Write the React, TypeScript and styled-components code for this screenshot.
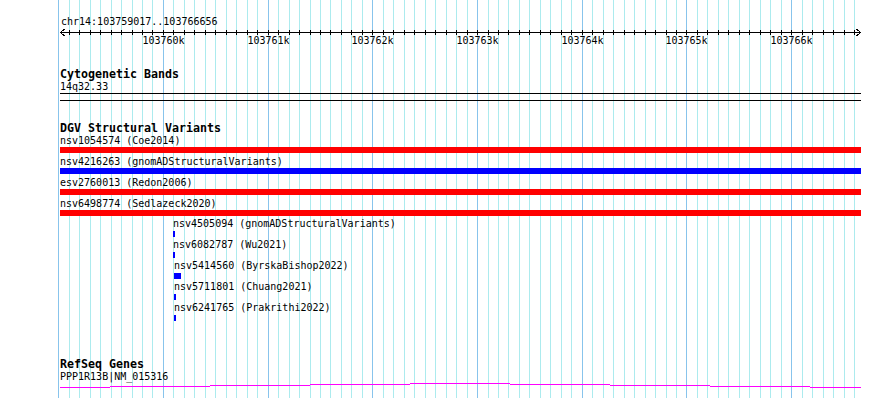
import React from "react";
import styled, { createGlobalStyle } from "styled-components";

const START = 103759017;
const END = 103766656;
const TRACK_LEFT = 60;
const TRACK_WIDTH = 800;
const PAGE_W = 890;
const PAGE_H = 398;

const toX = (bp: number) => ((bp - START) * TRACK_WIDTH) / (END - START + 1);
const px = (bp: number) => Math.round(toX(bp));

interface Variant {
  name: string;
  color: string;
  start: number;
  end: number;
}

// features that run across the whole view
const wideVariants: Variant[] = [
  { name: "nsv1054574 (Coe2014)", color: "#ff0000", start: START, end: END },
  { name: "nsv4216263 (gnomADStructuralVariants)", color: "#0000ff", start: START, end: END },
  { name: "esv2760013 (Redon2006)", color: "#ff0000", start: START, end: END },
  { name: "nsv6498774 (Sedlazeck2020)", color: "#ff0000", start: START, end: END },
];

// small ones, bumped onto their own rows
const smallVariants: Variant[] = [
  { name: "nsv4505094 (gnomADStructuralVariants)", color: "#0000ff", start: 103760096, end: 103760116 },
  { name: "nsv6082787 (Wu2021)", color: "#0000ff", start: 103760096, end: 103760116 },
  { name: "nsv5414560 (ByrskaBishop2022)", color: "#0000ff", start: 103760108, end: 103760175 },
  { name: "nsv5711801 (Chuang2021)", color: "#0000ff", start: 103760108, end: 103760128 },
  { name: "nsv6241765 (Prakrithi2022)", color: "#0000ff", start: 103760104, end: 103760128 },
];

const gridStops: number[] = [];
for (let bp = 103759000; bp <= 103766600; bp += 100) gridStops.push(bp);

const majorStops = gridStops.filter((bp) => bp % 1000 === 0 && bp > START);

// shallow "hat" of the intron line: [from, to, y]
const geneSegments: [number, number, number][] = [
  [0, 50, 5],
  [50, 150, 4],
  [150, 250, 3],
  [250, 350, 2],
  [350, 450, 1],
  [450, 550, 2],
  [550, 650, 3],
  [650, 750, 4],
  [750, 801, 5],
];

const GlobalStyle = createGlobalStyle`
  html, body {
    margin: 0;
    padding: 0;
    background: #ffffff;
  }
`;

const Panel = styled.div`
  position: relative;
  width: ${PAGE_W}px;
  height: ${PAGE_H}px;
  overflow: hidden;
  background: #ffffff;
  color: #000000;
  font-family: "DejaVu Sans Mono", "Liberation Mono", monospace;
`;

const GridLayer = styled.svg`
  position: absolute;
  left: 0;
  top: 0;
  display: block;
`;

const Tracks = styled.div`
  position: relative;
  z-index: 1;
  display: flex;
  flex-direction: column;
  width: 801px;
  padding-left: ${TRACK_LEFT}px;
`;

const SmallText = styled.div<{ $gap?: number; $shift?: number }>`
  height: 13px;
  margin-top: ${({ $gap }) => $gap ?? 0}px;
  padding-left: ${({ $shift }) => $shift ?? 0}px;
  font-size: 10px;
  line-height: 13px;
  white-space: nowrap;
`;

const TrackTitle = styled.div<{ $gap: number }>`
  height: 13px;
  margin-top: ${({ $gap }) => $gap}px;
  font-size: 11.63px;
  font-weight: bold;
  line-height: 13px;
  white-space: nowrap;
`;

const RulerArrow = styled.svg`
  display: block;
  overflow: visible;
`;

const RulerLabels = styled.div`
  position: relative;
  height: 13px;
  margin-top: -1px;
  font-size: 10px;
  line-height: 13px;
`;

const TickLabel = styled.span`
  position: absolute;
  top: 0;
  transform: translateX(-50%);
  white-space: nowrap;
`;

const Band = styled.div`
  width: 801px;
  height: 6px;
  border-top: 1px solid #000000;
  border-bottom: 1px solid #000000;
`;

const Feature = styled.div<{ $gap: number }>`
  display: flex;
  flex-direction: column;
  margin-top: ${({ $gap }) => $gap}px;
`;

const Bar = styled.div<{ $color: string; $lift?: number }>`
  height: 6px;
  margin-top: ${({ $lift }) => $lift ?? 0}px;
  background: ${({ $color }) => $color};
`;

const GeneLine = styled.svg`
  display: block;
  margin-top: -1px;
`;

const Grid: React.FC = () => (
  <GridLayer width={PAGE_W} height={PAGE_H} shapeRendering="crispEdges">
    {gridStops.map((bp) => (
      <rect
        key={bp}
        x={TRACK_LEFT + px(bp)}
        y={0}
        width={1}
        height={PAGE_H}
        fill={bp % 1000 === 0 ? "#88c4ec" : "#acebee"}
      />
    ))}
  </GridLayer>
);

const Ruler: React.FC = () => (
  <>
    <RulerArrow width={801} height={7} shapeRendering="crispEdges">
      <rect x={0} y={4} width={801} height={1} fill="#000" />
      {gridStops
        .filter((bp) => bp > START)
        .map((bp) => (
          <rect key={bp} x={px(bp)} y={2} width={1} height={5} fill="#000" />
        ))}
      <polyline points="4.5,1 0.5,4.5 4.5,8" fill="none" stroke="#000" strokeWidth={1} />
      <polyline points="796.5,1 800.5,4.5 796.5,8" fill="none" stroke="#000" strokeWidth={1} />
    </RulerArrow>
    <RulerLabels>
      {majorStops.map((bp) => (
        <TickLabel key={bp} style={{ left: px(bp) + 0.5 }}>
          {bp / 1000}k
        </TickLabel>
      ))}
    </RulerLabels>
  </>
);

const App: React.FC = () => {
  return (
    <>
      <GlobalStyle />
      <Panel>
        <Grid />
        <Tracks>
          <SmallText $gap={15} $shift={1}>
            chr14:103759017..103766656
          </SmallText>
          <Ruler />

          <TrackTitle $gap={21}>Cytogenetic Bands</TrackTitle>
          <SmallText $gap={-1}>14q32.33</SmallText>
          <Band />

          <TrackTitle $gap={21}>DGV Structural Variants</TrackTitle>
          {wideVariants.map((v, i) => (
            <Feature key={v.name} $gap={i === 0 ? -1 : 2}>
              <SmallText>{v.name}</SmallText>
              <Bar $color={v.color} style={{ width: 801 }} />
            </Feature>
          ))}
          {smallVariants.map((v, i) => {
            const left = px(v.start);
            const width = Math.max(2, px(v.end) - left);
            return (
              <Feature key={v.name} $gap={1}>
                <SmallText style={{ paddingLeft: left }}>{v.name}</SmallText>
                <Bar $color={v.color} $lift={1} style={{ marginLeft: left, width }} />
              </Feature>
            );
          })}

          <TrackTitle $gap={37}>RefSeq Genes</TrackTitle>
          <SmallText $gap={-1}>PPP1R13B|NM_015316</SmallText>
          <GeneLine width={801} height={6} shapeRendering="crispEdges">
            {geneSegments.map(([from, to, y]) => (
              <rect key={from} x={from} y={y} width={to - from} height={1} fill="#ff00ff" />
            ))}
          </GeneLine>
        </Tracks>
      </Panel>
    </>
  );
};

export default App;
